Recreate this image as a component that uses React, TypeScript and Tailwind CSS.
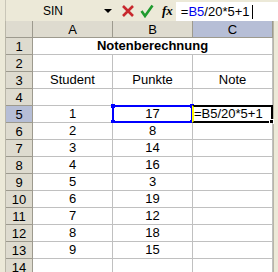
import React from 'react';

const rows: [string, string, string][] = [
  ['', '', ''],
  ['', '', ''],
  ['Student', 'Punkte', 'Note'],
  ['', '', ''],
  ['1', '17', '=B5/20*5+1'],
  ['2', '8', ''],
  ['3', '14', ''],
  ['4', '16', ''],
  ['5', '3', ''],
  ['6', '19', ''],
  ['7', '12', ''],
  ['8', '18', ''],
  ['9', '15', ''],
  ['', '', ''],
];

function Header({ label, active }: { label: string; active?: boolean }) {
  return (
    <div
      className={
        'flex h-[17px] items-center justify-center border-r border-b border-[#9d9a8e] text-[13px] leading-none ' +
        (active ? 'bg-[#b6bed6]' : 'bg-[#dedbcf]')
      }
    >
      {label}
    </div>
  );
}

export default function App() {
  return (
    <div
      className="h-[272px] w-[278px] overflow-hidden bg-[#ece9d8] text-black"
      style={{ fontFamily: '"Liberation Sans", Arial, sans-serif' }}
    >
      {/* formula bar */}
      <div className="flex h-[21px] items-center">
        <div className="w-[6px] self-stretch border-r border-[#c9c6b8]" />
        <div className="flex w-[90px] items-center pl-[37px] text-[12px]">SIN</div>
        <div className="flex w-[24px] justify-center">
          <div className="h-0 w-0 border-x-[4px] border-t-[4px] border-x-transparent border-t-black" />
        </div>
        <svg width="14" height="14" viewBox="0 0 14 14" className="ml-[1px]">
          <path d="M2 2 L12 12 M12 2 L2 12" stroke="#c8282d" strokeWidth="2.6" />
        </svg>
        <svg width="14" height="14" viewBox="0 0 14 14" className="ml-[5px]">
          <path d="M1.5 7 L5 12 L12.5 1.5" stroke="#1f9a2e" strokeWidth="2.6" fill="none" />
        </svg>
        <span
          className="ml-[8px] text-[13px] font-bold italic"
          style={{ fontFamily: '"Liberation Serif", "Times New Roman", serif' }}
        >
          fx
        </span>
        <div className="ml-[3px] flex h-[19px] flex-1 items-center self-end bg-white pl-[5px] text-[13px]">
          <span>=</span>
          <span className="text-[#0000ee]">B5</span>
          <span>/20*5+1</span>
          <span className="ml-[2px] h-[14px] w-[1px] bg-black" />
        </div>
      </div>

      {/* sheet */}
      <div className="flex">
        <div className="w-[6px] border-r border-[#b9b6a8]" />
        <div className="grid grid-cols-[27px_80px_80px_80px]">
          <Header label="" />
          <Header label="A" />
          <Header label="B" />
          <Header label="C" active />
          {rows.map((r, i) => {
            const n = i + 1;
            return (
              <React.Fragment key={n}>
                <Header label={String(n)} active={n === 5} />
                {n === 1 ? (
                  <div className="col-span-3 flex h-[17px] items-center justify-center border-r border-b border-[#c0c0c0] bg-white text-[13px] font-bold">
                    Notenberechnung
                  </div>
                ) : (
                  r.map((v, c) => (
                    <div
                      key={c}
                      className={
                        'relative flex h-[17px] items-center border-r border-b border-[#c0c0c0] bg-white text-[13px] ' +
                        (c === 2 && n === 5 ? 'justify-start pl-[1px]' : 'justify-center')
                      }
                    >
                      {v}
                      {n === 5 && c === 1 && (
                        <div className="absolute inset-[-1px_-1px_-1px_-1px] border-2 border-[#0000ff]">
                          <div className="absolute -top-[3px] -left-[3px] h-[4px] w-[4px] bg-[#0000ff]" />
                          <div className="absolute -bottom-[3px] -left-[3px] h-[4px] w-[4px] bg-[#0000ff]" />
                          <div className="absolute -top-[3px] -right-[3px] h-[4px] w-[4px] bg-[#0000ff]" />
                          <div className="absolute -right-[3px] -bottom-[3px] h-[4px] w-[4px] bg-[#0000ff]" />
                        </div>
                      )}
                      {n === 5 && c === 2 && (
                        <div className="absolute inset-[-1px_-1px_-1px_-1px] border-2 border-l-[#ffff00] border-black">
                          <div className="absolute -right-[3px] -bottom-[3px] h-[5px] w-[5px] border border-white bg-black" />
                        </div>
                      )}
                    </div>
                  ))
                )}
              </React.Fragment>
            );
          })}
        </div>
        <div className="w-[5px] border-l border-[#b9b6a8]" />
      </div>
    </div>
  );
}
